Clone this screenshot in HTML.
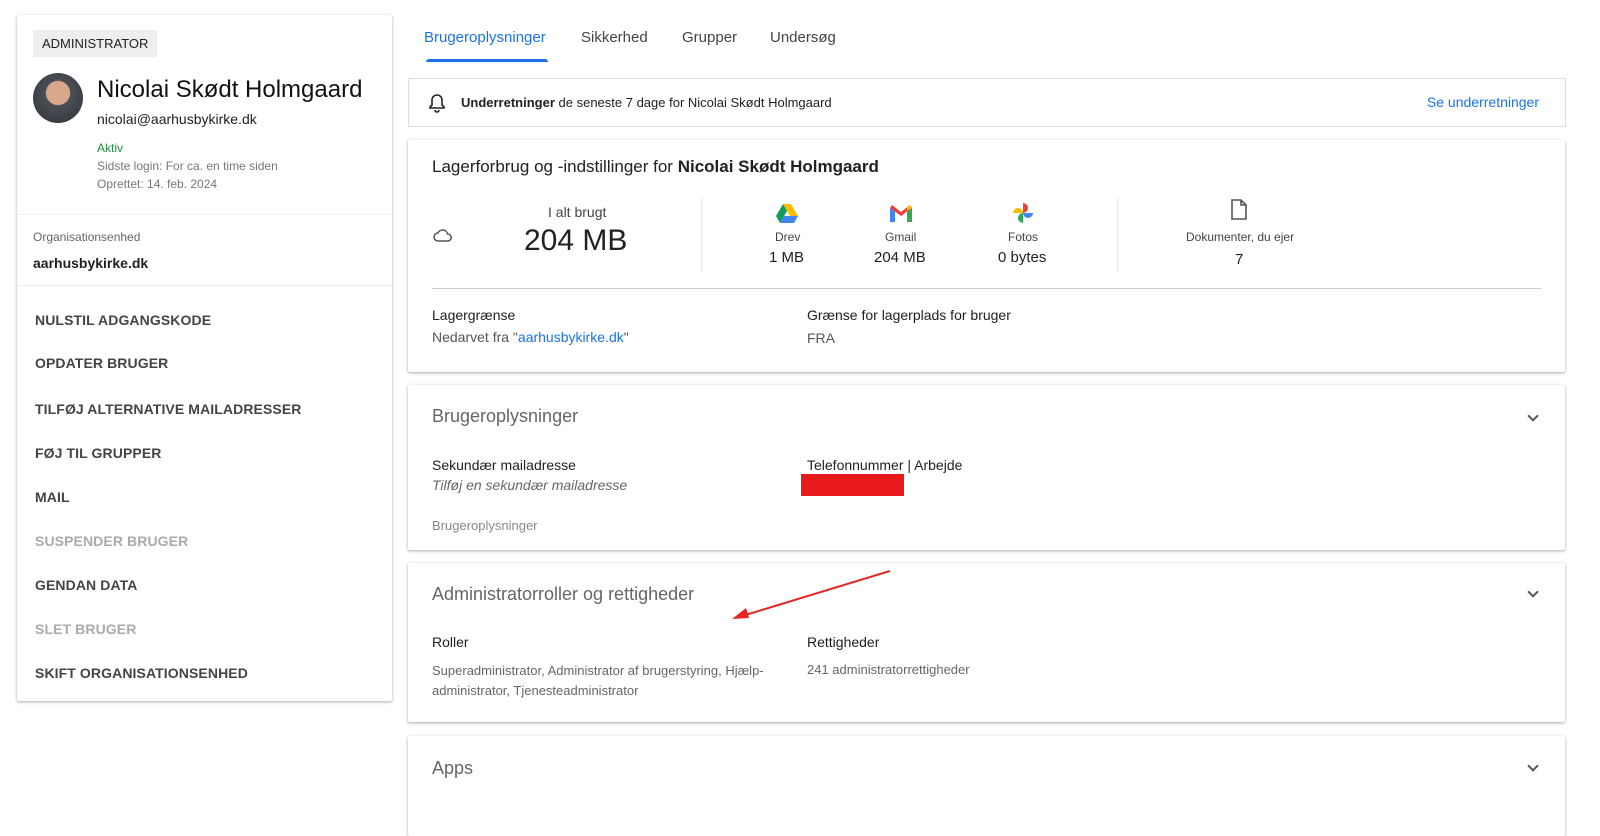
<!DOCTYPE html>
<html><head><meta charset="utf-8"><style>
*{box-sizing:border-box;margin:0;padding:0}
body{width:1600px;height:822px;background:#fff;font-family:"Liberation Sans",sans-serif;color:#202124;position:relative;overflow:hidden}
.abs{position:absolute}
.card{position:absolute;background:#fff;box-shadow:0 1px 2px rgba(60,64,67,.3),0 1px 3px 1px rgba(60,64,67,.12);border-radius:2px}
.t{position:absolute;white-space:nowrap}
.menu div{position:absolute;left:18px;font-size:14px;font-weight:bold;color:#444;letter-spacing:.1px}
.g{color:#777}
.sec{font-size:18px;color:#666}
.chev{position:absolute;width:8px;height:8px;border-right:2px solid #555;border-bottom:2px solid #555;transform:rotate(45deg)}
</style></head><body>

<div class="card" style="left:17px;top:15px;width:375px;height:686px">
 <div class="t" style="left:16px;top:15px;background:#eee;padding:6px 9px;font-size:13px;color:#222">ADMINISTRATOR</div>
 <div class="abs" style="left:16px;top:58px;width:50px;height:50px;border-radius:50%;background:radial-gradient(circle at 50% 40%,#d9a88c 0 30%,#4a4f55 32%,#2f3338 100%)"></div>
 <div class="t" style="left:80px;top:61px;font-size:24px;color:#111">Nicolai Skødt Holmgaard</div>
 <div class="t" style="left:80px;top:96px;font-size:14px">nicolai@aarhusbykirke.dk</div>
 <div class="t" style="left:80px;top:126px;font-size:12px;color:#1e8e3e">Aktiv</div>
 <div class="t g" style="left:80px;top:144px;font-size:12px">Sidste login: For ca. en time siden</div>
 <div class="t g" style="left:80px;top:162px;font-size:12px">Oprettet: 14. feb. 2024</div>
 <div class="abs" style="left:0;top:199px;width:375px;height:1px;background:#eee"></div>
 <div class="t g" style="left:16px;top:215px;font-size:12px;color:#666">Organisationsenhed</div>
 <div class="t" style="left:16px;top:240px;font-size:14px;font-weight:bold">aarhusbykirke.dk</div>
 <div class="abs" style="left:0;top:270px;width:375px;height:1px;background:#eee"></div>
 <div class="menu">
  <div style="top:297px">NULSTIL ADGANGSKODE</div>
  <div style="top:340px">OPDATER BRUGER</div>
  <div style="top:386px">TILFØJ ALTERNATIVE MAILADRESSER</div>
  <div style="top:430px">FØJ TIL GRUPPER</div>
  <div style="top:474px">MAIL</div>
  <div style="top:518px;color:#aaa">SUSPENDER BRUGER</div>
  <div style="top:562px">GENDAN DATA</div>
  <div style="top:606px;color:#aaa">SLET BRUGER</div>
  <div style="top:650px">SKIFT ORGANISATIONSENHED</div>
 </div>
</div>

<div class="t" style="left:424px;top:29px;font-size:15px;color:#1a73e8">Brugeroplysninger</div>
<div class="abs" style="left:426px;top:59px;width:122px;height:3px;background:#1a73e8;border-radius:3px 3px 0 0"></div>
<div class="t" style="left:581px;top:29px;font-size:15px;color:#444">Sikkerhed</div>
<div class="t" style="left:682px;top:29px;font-size:15px;color:#444">Grupper</div>
<div class="t" style="left:770px;top:29px;font-size:15px;color:#444">Undersøg</div>

<div class="abs" style="left:408px;top:78px;width:1158px;height:49px;border:1px solid #ddd;background:#fff">
 <svg class="abs" style="left:19px;top:14px" width="18" height="20" viewBox="0 0 18 20"><path d="M9 2a5 5 0 0 0-5 5v5l-2 2v1h14v-1l-2-2V7a5 5 0 0 0-5-5zM7 17a2 2 0 0 0 4 0" fill="none" stroke="#222" stroke-width="1.6"/></svg>
 <div class="t" style="left:52px;top:16px;font-size:13px"><b>Underretninger</b> de seneste 7 dage for Nicolai Skødt Holmgaard</div>
 <div class="t" style="right:26px;top:15px;font-size:14px;color:#1a73e8">Se underretninger</div>
</div>

<div class="card" style="left:408px;top:140px;width:1157px;height:232px">
 <div class="t" style="left:24px;top:17px;font-size:17px">Lagerforbrug og -indstillinger for <b>Nicolai Skødt Holmgaard</b></div>
 <svg class="abs" style="left:25px;top:88px" width="20" height="14" viewBox="0 0 20 14"><path d="M5 13a4 4 0 0 1 0-8 5 5 0 0 1 9.5 1A3.5 3.5 0 0 1 15 13z" fill="none" stroke="#555" stroke-width="1.5"/></svg>
 <div class="t" style="left:140px;top:64px;font-size:14px;color:#444">I alt brugt</div>
 <div class="t" style="left:116px;top:84px;font-size:30px">204 MB</div>
 <div class="abs" style="left:293px;top:58px;width:1px;height:74px;background:#e6e6e6"></div>
 <svg class="abs" style="left:368px;top:63px" width="22" height="20" viewBox="0 0 22 20"><path d="M7 1h8l7 12h-8z" fill="#fbbc04"/><path d="M7 1L0 13l4 7 7-12z" fill="#0f9d58"/><path d="M4 20h14l4-7H8z" fill="#4285f4"/></svg>
 <svg class="abs" style="left:482px;top:65px" width="22" height="17" viewBox="0 0 22 17"><path d="M0 3v14h5V6z" fill="#4285f4"/><path d="M22 3v14h-5V6z" fill="#34a853"/><path d="M0 3l11 8 11-8-2-3-9 7-9-7z" fill="#ea4335"/><path d="M17 6l5-3-2-3-3 2z" fill="#fbbc04"/></svg>
 <svg class="abs" style="left:604px;top:62px" width="22" height="22" viewBox="0 0 22 22"><path d="M11 11V1a5 5 0 0 1 0 10z" fill="#ea4335"/><path d="M11 11h10a5 5 0 0 1-10 0z" fill="#4285f4"/><path d="M11 11v10a5 5 0 0 1 0-10z" fill="#34a853"/><path d="M11 11H1a5 5 0 0 1 10 0z" fill="#fbbc04"/></svg>
 <div class="t" style="left:367px;top:90px;font-size:12px;color:#444">Drev</div>
 <div class="t" style="left:361px;top:109px;font-size:15px">1 MB</div>
 <div class="t" style="left:477px;top:90px;font-size:12px;color:#444">Gmail</div>
 <div class="t" style="left:466px;top:109px;font-size:15px">204 MB</div>
 <div class="t" style="left:600px;top:90px;font-size:12px;color:#444">Fotos</div>
 <div class="t" style="left:590px;top:109px;font-size:15px">0 bytes</div>
 <div class="abs" style="left:709px;top:58px;width:1px;height:74px;background:#e6e6e6"></div>
 <svg class="abs" style="left:822px;top:59px" width="18" height="21" viewBox="0 0 18 21"><path d="M2 1h9l5 5v14H2z M11 1v5h5" fill="none" stroke="#555" stroke-width="1.6"/></svg>
 <div class="t" style="left:778px;top:90px;font-size:12px;color:#444">Dokumenter, du ejer</div>
 <div class="t" style="left:827px;top:111px;font-size:15px">7</div>
 <div class="abs" style="left:24px;top:148px;width:1109px;height:1px;background:#ccc"></div>
 <div class="t" style="left:24px;top:167px;font-size:14px">Lagergrænse</div>
 <div class="t" style="left:24px;top:189px;font-size:14px;color:#555">Nedarvet fra "<span style="color:#1a73e8">aarhusbykirke.dk</span>"</div>
 <div class="t" style="left:399px;top:167px;font-size:14px">Grænse for lagerplads for bruger</div>
 <div class="t" style="left:399px;top:190px;font-size:14px;color:#555">FRA</div>
</div>

<div class="card" style="left:408px;top:385px;width:1157px;height:165px">
 <div class="t sec" style="left:24px;top:21px">Brugeroplysninger</div>
 <div class="chev" style="left:1121px;top:27px"></div>
 <div class="t" style="left:24px;top:72px;font-size:14px">Sekundær mailadresse</div>
 <div class="t" style="left:24px;top:92px;font-size:14px;color:#666;font-style:italic">Tilføj en sekundær mailadresse</div>
 <div class="t" style="left:399px;top:72px;font-size:14px">Telefonnummer | Arbejde</div>
 <div class="abs" style="left:393px;top:89px;width:103px;height:22px;background:#e8191b"></div>
 <div class="t" style="left:24px;top:133px;font-size:13px;color:#888">Brugeroplysninger</div>
</div>

<div class="card" style="left:408px;top:563px;width:1157px;height:159px">
 <div class="t sec" style="left:24px;top:21px">Administratorroller og rettigheder</div>
 <div class="chev" style="left:1121px;top:25px"></div>
 <div class="t" style="left:24px;top:71px;font-size:14px">Roller</div>
 <div class="t" style="left:24px;top:98px;font-size:13px;color:#666;line-height:20px">Superadministrator, Administrator af brugerstyring, Hjælp-<br>administrator, Tjenesteadministrator</div>
 <div class="t" style="left:399px;top:71px;font-size:14px">Rettigheder</div>
 <div class="t" style="left:399px;top:99px;font-size:13px;color:#666">241 administratorrettigheder</div>
</div>

<div class="card" style="left:408px;top:736px;width:1157px;height:100px">
 <div class="t sec" style="left:24px;top:22px">Apps</div>
 <div class="chev" style="left:1121px;top:26px"></div>
</div>

<svg class="abs" style="left:728px;top:566px" width="170" height="58" viewBox="0 0 170 58"><line x1="162" y1="5" x2="14" y2="50" stroke="#e52521" stroke-width="2"/><path d="M4 53l14-11 3 10z" fill="#e52521"/></svg>
</body></html>
